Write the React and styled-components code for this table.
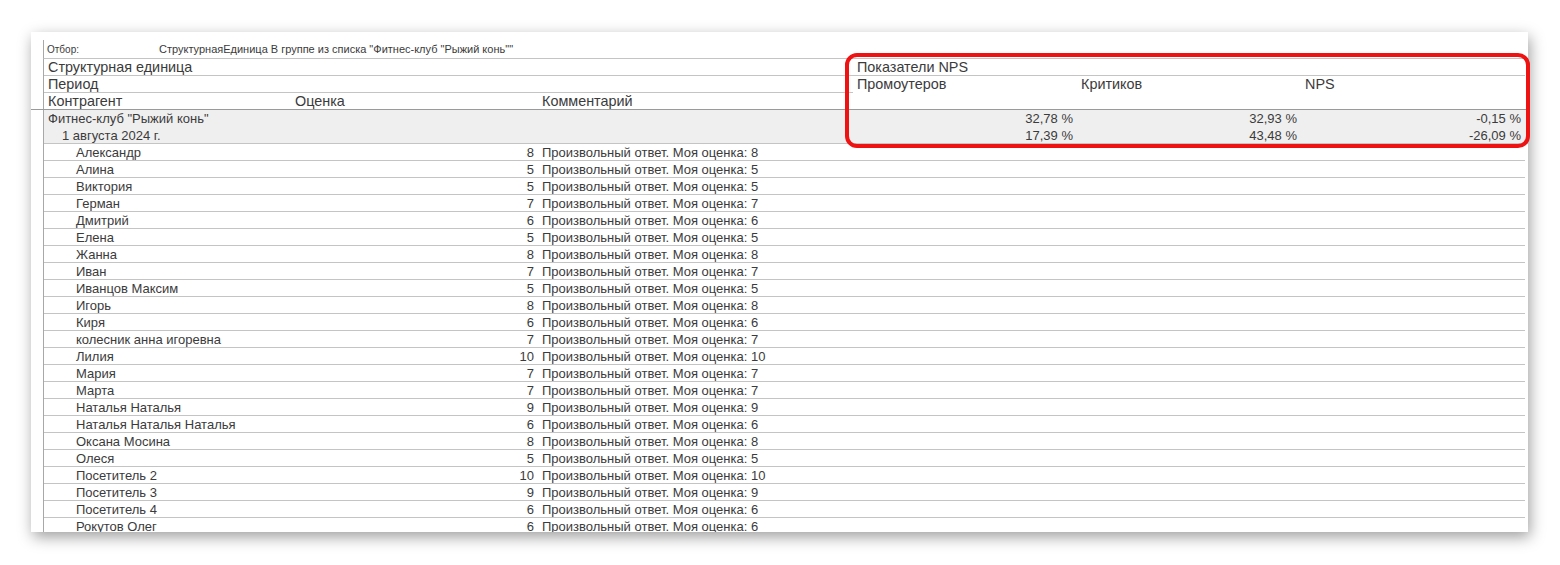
import styled, { createGlobalStyle } from "styled-components";

const GlobalStyle = createGlobalStyle`
	html, body {
		margin: 0;
		padding: 0;
		background: #ffffff;
		font-family: "Liberation Sans", Arial, sans-serif;
	}
`;

const COLS = "247px 247px 315px 224px 224px 224px";

const rows = [
	["Александр", 8],
	["Алина", 5],
	["Виктория", 5],
	["Герман", 7],
	["Дмитрий", 6],
	["Елена", 5],
	["Жанна", 8],
	["Иван", 7],
	["Иванцов Максим", 5],
	["Игорь", 8],
	["Киря", 6],
	["колесник анна игоревна", 7],
	["Лилия", 10],
	["Мария", 7],
	["Марта", 7],
	["Наталья Наталья", 9],
	["Наталья Наталья Наталья", 6],
	["Оксана Мосина", 8],
	["Олеся", 5],
	["Посетитель 2", 10],
	["Посетитель 3", 9],
	["Посетитель 4", 6],
	["Рокутов Олег", 6],
];

const groups = [
	{ title: 'Фитнес-клуб "Рыжий конь"', level: 0, values: ["32,78 %", "32,93 %", "-0,15 %"] },
	{ title: "1 августа 2024 г.", level: 1, values: ["17,39 %", "43,48 %", "-26,09 %"] },
];

export default function App() {
	return (
		<Page>
			<GlobalStyle />
			<Card>
				<FilterRow>
					<FilterLabel>Отбор:</FilterLabel>
					<FilterValue>СтруктурнаяЕдиница В группе из списка "Фитнес-клуб "Рыжий конь""</FilterValue>
				</FilterRow>
				<HeaderWrap>
					<HeaderGrid>
						<Cell $span="1 / 4" $line>Структурная единица</Cell>
						<Cell $span="4 / 7" $line>Показатели NPS</Cell>
						<Cell $span="1 / 4" $line>Период</Cell>
						<Cell $span="4 / 5" $rows="2 / 4">Промоутеров</Cell>
						<Cell $span="5 / 6" $rows="2 / 4">Критиков</Cell>
						<Cell $span="6 / 7" $rows="2 / 4">NPS</Cell>
						<Cell>Контрагент</Cell>
						<Cell>Оценка</Cell>
						<Cell>Комментарий</Cell>
					</HeaderGrid>
				</HeaderWrap>
				<Body>
					<GroupBlock>
						{groups.map((g) => (
							<GroupRow key={g.title}>
								<Cell $span="1 / 4" $indent={4 + g.level * 14} $top={1}>{g.title}</Cell>
								{g.values.map((v) => (
									<Cell key={v} $right $top={1}>{v}</Cell>
								))}
							</GroupRow>
						))}
					</GroupBlock>
					{rows.map(([name, score]) => (
						<DataRow key={name}>
							<Cell $indent={32} $top={1}>{name}</Cell>
							<Cell $right $top={1}>{score}</Cell>
							<Cell $top={1}>Произвольный ответ. Моя оценка: {score}</Cell>
						</DataRow>
					))}
				</Body>
			</Card>
			<Highlight />
		</Page>
	);
}

const Page = styled.div`
	position: relative;
	width: 1560px;
	height: 565px;
	padding: 32px 0 0 31px;
	box-sizing: border-box;
	overflow: hidden;
`;

const Card = styled.div`
	width: 1497px;
	height: 500px;
	background: #ffffff;
	box-shadow: 2px 5px 14px rgba(0, 0, 0, 0.38);
	padding-top: 8px;
	box-sizing: border-box;
	overflow: hidden;
	color: #3b3b3b;
`;

const FilterRow = styled.div`
	margin-left: 12px;
	width: 1481px;
	height: 18px;
	border-left: 1px solid #a8a8a8;
	border-bottom: 1px solid #c4c4c4;
	display: flex;
	align-items: center;
	font-size: 11px;
	box-sizing: content-box;
`;

const FilterLabel = styled.span`
	width: 112px;
	padding-left: 3px;
	font-size: 10px;
`;

const FilterValue = styled.span`
	white-space: nowrap;
`;

const HeaderWrap = styled.div`
	padding-left: 12px;
	border-bottom: 1px solid #9a9a9a;
`;

const HeaderGrid = styled.div`
	display: grid;
	grid-template-columns: ${COLS};
	grid-template-rows: 17px 17px 16px;
	border-left: 1px solid #a8a8a8;
	font-size: 14.4px;
`;

const Cell = styled.div`
	grid-column: ${(p) => p.$span || "auto"};
	grid-row: ${(p) => p.$rows || "auto"};
	border-bottom: ${(p) => (p.$line ? "1px solid #c4c4c4" : "none")};
	padding: ${(p) => p.$top || 0}px 4px 0 ${(p) => (p.$indent != null ? p.$indent : 4)}px;
	text-align: ${(p) => (p.$right ? "right" : "left")};
	line-height: 16px;
	white-space: nowrap;
	box-sizing: border-box;
`;

const Body = styled.div`
	margin-left: 12px;
	border-left: 1px solid #a8a8a8;
	font-size: 13px;
`;

const GroupBlock = styled.div`
	background: #efefef;
	border-bottom: 1px solid #c4c4c4;
	height: 33px;
	box-sizing: content-box;
	display: grid;
	grid-template-rows: 16.5px 16.5px;
`;

const GroupRow = styled.div`
	display: grid;
	grid-template-columns: ${COLS};
	grid-template-rows: 16.5px;
`;

const DataRow = styled.div`
	display: grid;
	grid-template-columns: ${COLS};
	grid-template-rows: 16px;
	height: 17px;
	border-bottom: 1px solid #c4c4c4;
	box-sizing: border-box;
	width: 1481px;
`;

const Highlight = styled.div`
	position: absolute;
	left: 845px;
	top: 53px;
	width: 685px;
	height: 95px;
	border: 4px solid #ee1212;
	border-radius: 12px;
	box-sizing: border-box;
	pointer-events: none;
`;
